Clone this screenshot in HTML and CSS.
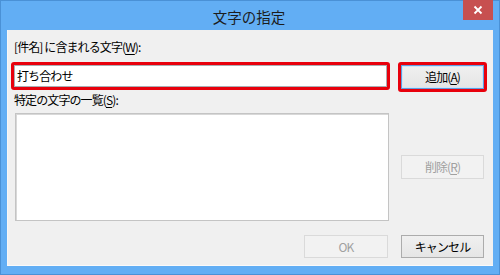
FILE: index.html
```html
<!DOCTYPE html>
<html lang="ja">
<head>
<meta charset="utf-8">
<title>文字の指定</title>
<link rel="stylesheet" href="styles.css">
</head>
<body>
<div class="window">
  <div class="titlebar">
    <span class="title">文字の指定</span>
    <div class="close"><svg width="10" height="10" viewBox="0 0 10 10"><path d="M1.5 1.5 L8.5 8.5 M8.5 1.5 L1.5 8.5" stroke="#fff" stroke-width="1.8" fill="none"/></svg></div>
  </div>
  <div class="client">
    <div class="label label1">[件名] に含まれる文字(<u>W</u>):</div>
    <div class="hl input-wrap">
      <div class="input">打ち合わせ</div>
    </div>
    <div class="hl btn-wrap">
      <div class="btn default">追加(<u>A</u>)</div>
    </div>
    <div class="label label2">特定の文字の一覧(<u>S</u>):</div>
    <div class="list"></div>
    <div class="btn disabled del">削除(<u>R</u>)</div>
    <div class="footer">
      <div class="btn disabled">OK</div>
      <div class="btn">キャンセル</div>
    </div>
  </div>
</div>
</body>
</html>
```
FILE: styles.css
```css
html, body {
  margin: 0;
  padding: 0;
}
body {
  width: 500px;
  height: 275px;
  font-family: "Noto Sans CJK JP", "Noto Sans", sans-serif;
  font-size: 12px;
  color: #000;
}
.window {
  width: 500px;
  height: 275px;
  box-sizing: border-box;
  background: #62aef4;
  border: 1px solid #4a91d6;
  display: flex;
  flex-direction: column;
}
.titlebar {
  height: 29px;
  position: relative;
  display: flex;
  justify-content: center;
  align-items: center;
}
.title {
  font-size: 14.5px;
  color: #1c1c1c;
  line-height: 16px;
  margin-left: -2px;
  margin-top: 3px;
}
.close {
  position: absolute;
  right: 6px;
  top: -1px;
  width: 30px;
  height: 20px;
  background: #c75050;
  display: flex;
  align-items: center;
  justify-content: center;
}
.client {
  margin: 0 6px;
  height: 236px;
  box-sizing: border-box;
  background: #f0f0f0;
  border-left: 1px solid #f7f7f7;
  border-bottom: 1px solid #fafafa;
  display: grid;
  grid-template-columns: 375px 84px;
  grid-template-rows: 26px 27px 21px 122px 23px;
  column-gap: 12px;
  padding: 9px 0 0 6px;
  align-content: start;
  letter-spacing: -0.9px;
}
.label {
  grid-column: 1 / 3;
  line-height: 16px;
  height: 16px;
  white-space: nowrap;
  align-self: start;
}
.label1 { grid-row: 1; }
.label2 { grid-row: 3; }
.input-wrap {
  grid-row: 2;
  grid-column: 1;
  align-self: start;
  width: 373px;
  height: 22px;
}
.btn-wrap {
  grid-row: 2;
  grid-column: 2;
  align-self: start;
  width: 83px;
  height: 24px;
}
.hl {
  position: relative;
}
.hl::after {
  content: "";
  position: absolute;
  inset: -3px;
  border: 3px solid #e8000c;
  border-radius: 3px;
  pointer-events: none;
}
.input {
  box-sizing: border-box;
  height: 22px;
  background: #fff;
  border: 1px solid #abadb3;
  padding-left: 2px;
  line-height: 20px;
}
.list {
  grid-row: 4;
  grid-column: 1;
  align-self: start;
  margin-left: 1px;
  width: 374px;
  height: 108px;
  box-sizing: border-box;
  background: #fff;
  border: 1px solid #c4c4c4;
  box-shadow: inset 1px 1px 0 #d8d8d8;
}
.btn {
  box-sizing: border-box;
  width: 84px;
  height: 23px;
  border: 1px solid #acacac;
  background: linear-gradient(#f0f0f0, #e5e5e5);
  display: flex;
  align-items: center;
  justify-content: center;
  line-height: 16px;
  white-space: nowrap;
}
.btn-wrap .btn {
  width: 83px;
  height: 24px;
}
.btn.default {
  border-color: #5d9fe0;
  box-shadow: inset 0 0 0 1px #cfe4f8;
}
.btn.disabled {
  border-color: #dadada;
  background: #f2f2f2;
  color: #a0a0a0;
}
.del {
  grid-row: 4;
  grid-column: 2;
  align-self: start;
  margin-top: 42px;
  width: 83px;
  height: 24px;
}
.footer {
  grid-row: 5;
  grid-column: 1 / 3;
  display: flex;
  justify-content: flex-end;
  gap: 13px;
  height: 23px;
}
.footer .btn:last-child {
  width: 83px;
  margin-right: 1px;
}
u {
  text-decoration-thickness: 1px;
  text-underline-offset: 2px;
}
```
